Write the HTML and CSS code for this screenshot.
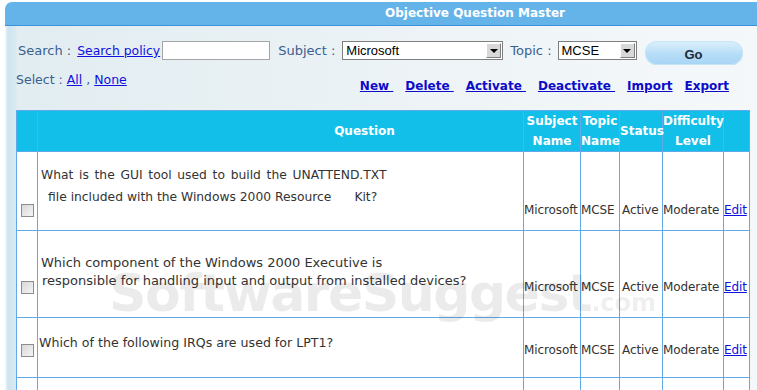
FILE: index.html
```html
<!DOCTYPE html>
<html lang="en">
<head>
    <meta charset="UTF-8">
    <meta name="viewport" content="width=device-width, initial-scale=1.0">
    <title>Objective Question Master</title>
    <link rel="stylesheet" href="styles.css">
</head>
<body>
    <div class="panel">
        <div class="panel-title">Objective Question Master</div>
        <div class="panel-body">
            <!-- Search bar -->
            <div class="search-bar">
                <span class="label">Search :</span>
                <a href="#" class="search-link">Search policy</a>
                <input type="text" class="search-input">
                <span class="label subject-label">Subject :</span>
                <div class="select subject-select">
                    <span class="select-text">Microsoft</span>
                    <span class="select-arrow"></span>
                </div>
                <span class="label topic-label">Topic :</span>
                <div class="select topic-select">
                    <span class="select-text">MCSE</span>
                    <span class="select-arrow"></span>
                </div>
                <button class="go-btn">Go</button>
            </div>

            <div class="tool-row">
                <div class="select-links">Select : <a href="#">All</a> , <a href="#">None</a></div>
                <div class="actions">
                    <a href="#">New&nbsp;</a>
                    <a href="#">Delete&nbsp;</a>
                    <a href="#">Activate&nbsp;</a>
                    <a href="#">Deactivate&nbsp;</a>
                    <a href="#">Import</a>
                    <a href="#">Export</a>
                </div>
            </div>

            <!-- Question grid -->
            <table class="grid">
                <colgroup>
                    <col class="col-check">
                    <col class="col-question">
                    <col class="col-subject">
                    <col class="col-topic">
                    <col class="col-status">
                    <col class="col-level">
                    <col class="col-edit">
                </colgroup>
                <thead>
                    <tr>
                        <th></th>
                        <th class="question-head">Question</th>
                        <th>Subject Name</th>
                        <th>Topic Name</th>
                        <th>Status</th>
                        <th>Difficulty Level</th>
                        <th></th>
                    </tr>
                </thead>
                <tbody>
                    <tr class="row-one">
                        <td class="check"><span class="checkbox"></span></td>
                        <td class="question">
                            <span class="q-line q-spaced">What is the GUI tool used to build the UNATTEND.TXT</span>
                            <span class="q-line q-indent">file included with the Windows 2000 Resource<span class="q-gap">Kit?</span></span>
                        </td>
                        <td>Microsoft</td>
                        <td>MCSE</td>
                        <td class="status">Active</td>
                        <td>Moderate</td>
                        <td><a href="#">Edit</a></td>
                    </tr>
                    <tr class="row-two">
                        <td class="check"><span class="checkbox"></span></td>
                        <td class="question">
                            <span class="q-line">Which component of the Windows 2000 Executive is</span>
                            <span class="q-line q-nudge">responsible for handling input and output from installed devices?</span>
                        </td>
                        <td>Microsoft</td>
                        <td>MCSE</td>
                        <td class="status">Active</td>
                        <td>Moderate</td>
                        <td><a href="#">Edit</a></td>
                    </tr>
                    <tr class="row-three">
                        <td class="check"><span class="checkbox"></span></td>
                        <td class="question">
                            <span class="q-line">Which of the following IRQs are used for LPT1?</span>
                        </td>
                        <td>Microsoft</td>
                        <td>MCSE</td>
                        <td class="status">Active</td>
                        <td>Moderate</td>
                        <td><a href="#">Edit</a></td>
                    </tr>
                    <tr class="row-four">
                        <td class="check"></td>
                        <td class="question"></td>
                        <td></td>
                        <td></td>
                        <td></td>
                        <td></td>
                        <td></td>
                    </tr>
                </tbody>
            </table>
        </div>
        <div class="watermark">SoftwareSuggest<span class="watermark-dot">.com</span></div>
    </div>
</body>
</html>
```

FILE: styles.css
```css
html, body {
    overflow: hidden;
}
body {
    font-family: 'DejaVu Sans', Verdana, sans-serif;
    font-size: 12px;
    margin: 0;
    background: #fff;
    color: #333;
}
a {
    color: #1010e0;
}
.panel {
    position: relative;
    width: 940px;
    margin: 2px 0 0 5px;
}
.panel-title {
    height: 23px;
    line-height: 22px;
    background: #64b4ea;
    border-bottom: 1px solid #3b93dc;
    border-top-left-radius: 7px;
    color: #fff;
    font-weight: bold;
    text-align: center;
}
.panel-body {
    padding: 15px 0 0 11px;
    height: 400px;
    background:
        linear-gradient(to right, #fff 0, #e3f1f7 1px, #cfe5ef 3px, #d8eaf2 11px, #e2edf1 12px, #edf3f6 45%, #f3f7f9 70%, #f6f9fa 100%);
}
.search-bar {
    display: flex;
    align-items: flex-start;
    height: 25px;
}
.label {
    line-height: 19px;
    font-size: 13px;
    color: #3a5f8f;
    margin-left: 2px;
}
.search-link {
    line-height: 19px;
    font-size: 12.4px;
    margin-left: 6px;
}
.search-input {
    width: 108px;
    height: 19px;
    box-sizing: border-box;
    margin: 0 0 0 2px;
    border: 1px solid #a5a5a5;
    background: #fff;
    padding: 0;
}
.subject-label {
    margin-left: 8px;
}
.topic-label {
    margin-left: 7px;
}
.select {
    display: flex;
    height: 19px;
    box-sizing: border-box;
    border: 1px solid #7f7f7f;
    background: #fff;
    font-family: 'Liberation Sans', Arial, sans-serif;
    font-size: 13px;
    color: #000;
}
.subject-select {
    width: 161px;
    margin-left: 7px;
}
.topic-select {
    width: 79px;
    margin-left: 6px;
}
.select-text {
    flex: 1;
    line-height: 17px;
    padding-left: 3px;
}
.select-arrow {
    width: 15px;
    margin: 1px;
    box-sizing: border-box;
    border: 1px solid;
    border-color: #fff #808080 #808080 #fff;
    background: #d8d8d8;
    display: flex;
    align-items: center;
    justify-content: center;
}
.select-arrow::after {
    content: '';
    border-left: 4px solid transparent;
    border-right: 4px solid transparent;
    border-top: 4px solid #000;
}
.go-btn {
    width: 98px;
    height: 24px;
    margin-left: 8px;
    border: none;
    border-radius: 12px;
    background: linear-gradient(#dcf0fc, #b4dcf7 60%, #a7d4f4);
    box-shadow: inset 0 0 0 1px #c8e4f7;
    font-family: 'Liberation Sans', Arial, sans-serif;
    font-weight: bold;
    font-size: 13px;
    color: #1c2a38;
    padding: 2px 0 0;
}
.tool-row {
    display: flex;
    justify-content: space-between;
    align-items: flex-start;
    width: 733px;
    height: 38px;
    margin-top: 6px;
}
.select-links {
    font-size: 12.5px;
    color: #3a5f8f;
    line-height: 16px;
}
.select-links a {
    color: #1010e0;
}
.actions {
    display: flex;
    gap: 12px;
    margin-top: 6px;
    padding-right: 20px;
}
.actions a {
    font-weight: bold;
    font-size: 12px;
    color: #0c0cc8;
    line-height: 16px;
}
.grid {
    table-layout: fixed;
    width: 733px;
    border-collapse: collapse;
    border: 1px solid #60aaea;
    background: #fff;
}
.col-check { width: 21px; }
.col-question { width: 486px; }
.col-subject { width: 57px; }
.col-topic { width: 39px; }
.col-status { width: 43px; }
.col-level { width: 61px; }
.col-edit { width: 26px; }
.grid th,
.grid td {
    border: 1px solid #60aaea;
    padding: 0;
    white-space: nowrap;
    overflow: visible;
}
.grid th {
    height: 40px;
    background: #12bfe9;
    color: #fff;
    font-weight: bold;
    white-space: normal;
    line-height: 20px;
    text-align: center;
}
.grid th.question-head {
    padding-left: 168px;
}
.grid td {
    vertical-align: bottom;
    line-height: 16px;
    letter-spacing: -0.1px;
}
.grid td.check {
    text-align: center;
}
.grid td.question {
    vertical-align: top;
    padding-left: 3px;
    font-size: 13px;
    letter-spacing: 0;
    position: relative;
    z-index: 1;
}
.grid td.status {
    padding-left: 2px;
}
.checkbox {
    display: inline-block;
    width: 11px;
    height: 11px;
    border: 1px solid #8c8c8c;
    background: linear-gradient(135deg, #d8d8d8, #f4f4f4);
    vertical-align: middle;
    margin-bottom: 1px;
}
.q-line {
    display: block;
}
.row-one {
    height: 79px;
}
.row-one td {
    padding-bottom: 12px;
}
.row-one td.question {
    padding-top: 12px;
    line-height: 22px;
    font-size: 12.3px;
}
.q-spaced {
    word-spacing: 1.8px;
}
.q-indent {
    padding-left: 7px;
}
.q-gap {
    margin-left: 23px;
}
.row-two {
    height: 87px;
}
.row-two td {
    padding-bottom: 22px;
}
.row-two td.question {
    padding-top: 23px;
    line-height: 18px;
}
.q-nudge {
    padding-left: 1px;
}
.row-three {
    height: 60px;
}
.row-three td {
    padding-bottom: 19px;
}
.row-three td.question {
    padding: 16px 0 0 1px;
    line-height: 18px;
    font-size: 12.6px;
}
.row-four {
    height: 40px;
}
.watermark {
    position: absolute;
    left: 104px;
    top: 265px;
    font-family: 'DejaVu Sans', sans-serif;
    font-weight: bold;
    font-size: 52px;
    line-height: 52px;
    letter-spacing: -1.5px;
    color: rgba(0, 0, 0, 0.08);
    pointer-events: none;
    z-index: 2;
}
.watermark-dot {
    font-size: 24px;
    letter-spacing: 0;
}
```
